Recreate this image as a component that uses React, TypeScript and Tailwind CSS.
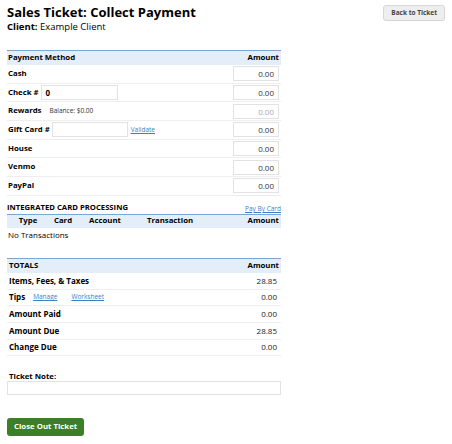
import React from 'react';

const amtInput = 'w-[46px] h-[15px] border border-[#e2e2e2] bg-white text-right pr-[4px] text-[8px] text-[#333] leading-[13px]';

function PayRow({ label, children, muted }: { label: string; children?: React.ReactNode; muted?: boolean }) {
  return (
    <div className="flex items-center h-[18.7px] border-b border-[#eeeeee] pl-[1px] pr-[2px]">
      <span className="font-bold text-[7.8px] text-black">{label}</span>
      <div className="flex items-center flex-1">{children}</div>
      <div className={`${amtInput} ${muted ? 'text-[#aaa]' : ''}`}>0.00</div>
    </div>
  );
}

function TotalRow({ label, value, children }: { label: string; value: string; children?: React.ReactNode }) {
  return (
    <div className="flex items-center h-[16.7px] border-b border-[#eeeeee] pl-[2px] pr-[2px] text-[8px]">
      <span className="font-bold text-black">{label}</span>
      <div className="flex items-center flex-1">{children}</div>
      <span className="text-[#222] pr-[2px]">{value}</span>
    </div>
  );
}

export default function App() {
  return (
    <div className="w-[452px] h-[444px] bg-white relative" style={{ fontFamily: '"Open Sans", sans-serif' }}>
      <div className="flex justify-between px-[7px] pt-[3px]">
        <div>
          <h1 className="text-[13px] font-bold leading-[18px] text-black">Sales Ticket: Collect Payment</h1>
          <div className="text-[9.5px] leading-[12px] text-black">
            <span className="font-bold">Client:</span> Example Client
          </div>
        </div>
        <button className="mt-[2px] h-[16px] px-[7px] rounded-[3px] border border-[#d6d6d6] bg-[#eeeeee] text-[6.5px] font-bold text-[#444]">
          Back to Ticket
        </button>
      </div>

      <div className="w-[274px] ml-[7px]">
        {/* Payment methods */}
        <div className="mt-[17px] border-t-[1.5px] border-[#7aa7d2]">
          <div className="flex justify-between items-center h-[14px] bg-[#e4eef9] pl-[1px] pr-[2px] text-[7.8px] font-bold text-black">
            <span>Payment Method</span>
            <span>Amount</span>
          </div>
          <PayRow label="Cash" />
          <PayRow label="Check #">
            <div className="ml-[2px] w-[77px] h-[15px] border border-[#e2e2e2] text-[8px] font-bold leading-[13px] pl-[4px]">0</div>
          </PayRow>
          <PayRow label="Rewards" muted>
            <span className="ml-[8px] text-[6.5px] text-[#333]">Balance: $0.00</span>
          </PayRow>
          <PayRow label="Gift Card #">
            <div className="ml-[2px] w-[76px] h-[15px] border border-[#e2e2e2]" />
            <a className="ml-[3px] text-[6.5px] text-[#3b80c6] underline">Validate</a>
          </PayRow>
          <PayRow label="House" />
          <PayRow label="Venmo" />
          <PayRow label="PayPal" />
        </div>

        {/* Integrated card processing */}
        <div className="mt-[6px]">
          <div className="flex justify-between items-end h-[12px]">
            <span className="font-bold text-black text-[7.7px]">INTEGRATED CARD PROCESSING</span>
            <a className="text-[6.5px] text-[#3b80c6] underline">Pay By Card</a>
          </div>
          <div className="border-t-[1.5px] border-[#7aa7d2] flex items-center h-[14px] bg-[#e4eef9] text-[7.8px] font-bold text-black">
            <span className="w-[42px] text-center">Type</span>
            <span className="w-[28px] text-center">Card</span>
            <span className="w-[56px] text-center">Account</span>
            <span className="w-[74px] text-center">Transaction</span>
            <span className="flex-1 text-right pr-[2px]">Amount</span>
          </div>
          <div className="h-[14px] flex items-center text-[8px] text-black px-[1px]">No Transactions</div>
        </div>

        {/* Totals */}
        <div className="mt-[16px] border-t-[1.5px] border-[#7aa7d2]">
          <div className="flex justify-between items-center h-[14px] bg-[#e4eef9] pl-[2px] pr-[2px] text-[7.8px] font-bold text-black">
            <span>TOTALS</span>
            <span>Amount</span>
          </div>
          <TotalRow label="Items, Fees, & Taxes" value="28.85" />
          <TotalRow label="Tips" value="0.00">
            <a className="ml-[8px] text-[6.5px] text-[#3b80c6] underline">Manage</a>
            <a className="ml-[14px] text-[6.5px] text-[#3b80c6] underline">Worksheet</a>
          </TotalRow>
          <TotalRow label="Amount Paid" value="0.00" />
          <TotalRow label="Amount Due" value="28.85" />
          <TotalRow label="Change Due" value="0.00" />
        </div>

        {/* Note */}
        <div className="mt-[15px]">
          <div className="text-[7.8px] font-bold text-black px-[2px] leading-[10px]">Ticket Note:</div>
          <div className="h-[14px] border border-[#e2e2e2]" />
        </div>

        <button className="mt-[23px] h-[18px] px-[7px] rounded-[3px] bg-[#3b7f27] text-white text-[7.8px] font-bold">
          Close Out Ticket
        </button>
      </div>
    </div>
  );
}
